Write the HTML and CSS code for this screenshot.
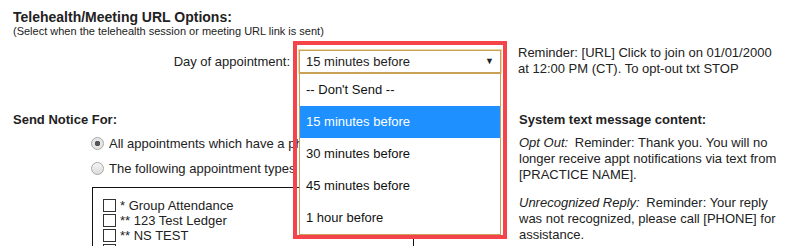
FILE: index.html
```html
<!DOCTYPE html>
<html lang="en">
<head>
  <meta charset="UTF-8" />
  <title>Telehealth Reminder Settings</title>
  <link rel="stylesheet" href="styles.css">
</head>
<body>
  <div class="page">
    <div class="section-head">
      <div class="title">Telehealth/Meeting URL Options:</div>
      <div class="hint">(Select when the telehealth session or meeting URL link is sent)</div>
    </div>

    <div class="when-row">
      <div class="when-label">Day of appointment:</div>
      <div class="field">
        <div class="select">
          <span>15 minutes before</span>
          <span class="arrow">&#9660;</span>
        </div>
        <ul class="options">
          <li>-- Don't Send --</li>
          <li class="selected">15 minutes before</li>
          <li>30 minutes before</li>
          <li>45 minutes before</li>
          <li>1 hour before</li>
        </ul>
        <div class="highlight"></div>
      </div>
      <div class="preview">Reminder: [URL] Click to join on 01/01/2000 at 12:00 PM (CT). To opt-out txt STOP</div>
    </div>

    <div class="lower">
      <div class="notice">
        <div class="subtitle">Send Notice For:</div>
        <label class="radio-row"><input type="radio" name="scope" checked /> All appointments which have a phone number</label>
        <label class="radio-row"><input type="radio" name="scope" /> The following appointment types only:</label>
        <div class="type-box">
          <div class="type-list">
            <label class="type-row"><input type="checkbox" /> * Group Attendance</label>
            <label class="type-row"><input type="checkbox" /> ** 123 Test Ledger</label>
            <label class="type-row"><input type="checkbox" /> ** NS TEST</label>
            <label class="type-row"><input type="checkbox" /> *** Session Type</label>
            <label class="type-row"><input type="checkbox" /> Assessment</label>
            <label class="type-row"><input type="checkbox" /> Follow Up</label>
            <label class="type-row"><input type="checkbox" /> Intake</label>
          </div>
        </div>
      </div>

      <div class="system">
        <div class="subtitle">System text message content:</div>
        <p><span class="tag">Opt Out:</span> Reminder: Thank you. You will no longer receive appt notifications via text from [PRACTICE NAME].</p>
        <p><span class="tag">Unrecognized Reply:</span> Reminder: Your reply was not recognized, please call [PHONE] for assistance.</p>
      </div>
    </div>
  </div>
</body>
</html>
```

FILE: styles.css
```css
body {
  margin: 0;
  font-family: "Liberation Sans", Arial, sans-serif;
  font-size: 13px;
  color: #222;
  background: #fff;
  overflow: hidden;
}

.page {
  width: 788px;
  height: 246px;
  overflow: hidden;
}

.section-head {
  padding: 9px 0 0 13px;
}

.title {
  font-size: 14px;
  font-weight: bold;
  line-height: 16px;
}

.hint {
  font-size: 11px;
  line-height: 13px;
}

.when-row {
  display: flex;
  align-items: flex-start;
  margin-top: 7px;
}

.when-label {
  width: 290px;
  text-align: right;
  margin-top: 5px;
  line-height: 23px;
  margin-right: 9px;
}

.field {
  position: relative;
  width: 202px;
  margin-top: 5px;
  z-index: 2;
}

.select {
  display: flex;
  justify-content: space-between;
  align-items: center;
  height: 21px;
  padding: 0 6px 0 6px;
  border: 1px solid #c9a157;
  box-shadow: 0 0 0 1px #ecd6a6;
  background: #fff;
  line-height: 21px;
}

.arrow {
  font-size: 9px;
}

.options {
  position: absolute;
  top: 23px;
  left: 0;
  width: 200px;
  margin: 0;
  padding: 0;
  list-style: none;
  background: #fff;
  border: 1px solid #c9a157;
}

.options li {
  height: 32px;
  line-height: 32px;
  padding-left: 6px;
  color: #111;
}

.options li.selected {
  background: #1e90ff;
  color: #fff;
}

.highlight {
  position: absolute;
  top: -9px;
  left: -6px;
  width: 206px;
  height: 190px;
  border: 4px solid #f4434b;
  pointer-events: none;
}

.preview {
  width: 262px;
  margin-left: 17px;
  line-height: 16px;
}

.lower {
  display: flex;
  margin-top: 35px;
}

.notice {
  width: 506px;
  padding-left: 13px;
}

.subtitle {
  font-weight: bold;
  line-height: 16px;
}

.radio-row {
  display: flex;
  align-items: center;
  height: 25px;
  padding-left: 78px;
  white-space: nowrap;
}

.radio-row:first-of-type {
  margin-top: 3px;
}

.radio-row input {
  appearance: none;
  width: 13px;
  height: 13px;
  margin: 0 5px 0 0;
  border: 1px solid #a8a8a8;
  border-radius: 50%;
  background: linear-gradient(#f4f4f4, #dcdcdc);
}

.radio-row input:checked {
  background: radial-gradient(circle, #555 0 2.5px, #e6e6e6 3px);
}

.type-box {
  width: 320px;
  height: 80px;
  margin: 6px 0 0 79px;
  border: 1px solid #111;
  overflow-y: scroll;
}

.type-box::-webkit-scrollbar {
  width: 18px;
}

.type-box::-webkit-scrollbar-thumb {
  background: #d2d2d2;
  border: 2px solid #fff;
}

.type-list {
  padding: 10px 0 0 10px;
}

.type-row {
  display: flex;
  align-items: center;
  height: 15px;
}

.type-row input {
  appearance: none;
  width: 13px;
  height: 13px;
  margin: 0 4px 0 0;
  border: 1px solid #333;
  background: #fff;
}

.system {
  width: 265px;
}

.system p {
  margin: 7px 0 12px;
  line-height: 16px;
}

.tag {
  font-style: italic;
  margin-right: 3px;
}
```
